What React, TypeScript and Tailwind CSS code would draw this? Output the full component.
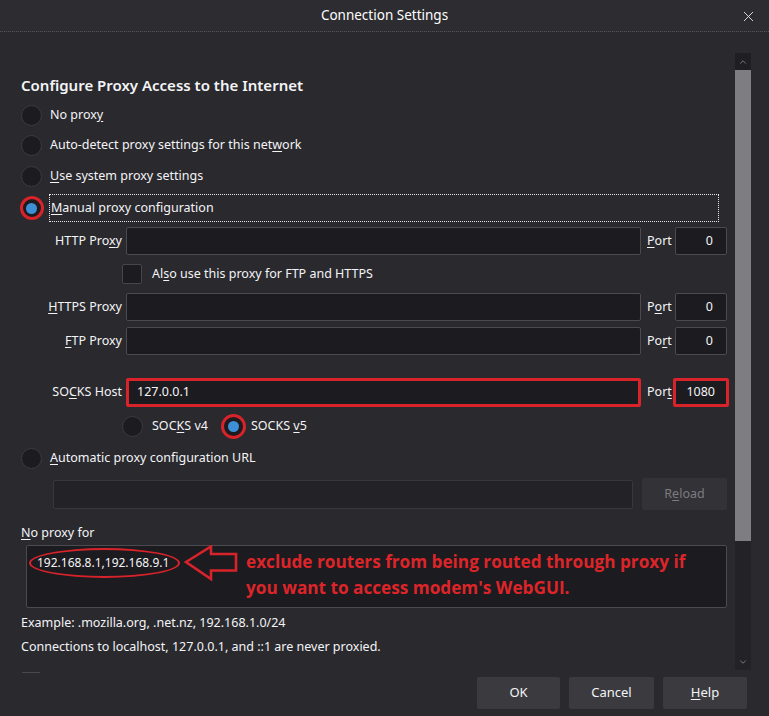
import { X, ChevronUp, ChevronDown } from 'lucide-react';

const u = 'underline underline-offset-[2px] decoration-1';

const Radio = ({ on = false }: { on?: boolean }) =>
  on ? (
    <div className="w-[21px] flex justify-center shrink-0">
      <div className="w-[24px] h-[24px] shrink-0 rounded-full border-[3px] border-[#d8232a] bg-[#1c1b20] flex items-center justify-center">
        <div className="w-[11px] h-[11px] rounded-full bg-[#3d8fd6]" />
      </div>
    </div>
  ) : (
    <div className="w-[21px] h-[21px] shrink-0 rounded-full bg-[#1c1b20] border border-[#3c3b41]" />
  );

const Field = ({ red = false, value = '' }: { red?: boolean; value?: string }) => (
  <div
    className={
      'w-[515px] h-full rounded-[2px] bg-[#1c1b20] flex items-center pl-[8px] text-[#f4f4f6] ' +
      (red ? 'border-[3px] border-[#d8232a]' : 'border border-[#4a4a50]')
    }
  >
    {value}
  </div>
);

const ProxyRow = ({
  label,
  port,
  portValue = '0',
  red = false,
  value = '',
  top,
}: {
  label: React.ReactNode;
  port: React.ReactNode;
  portValue?: string;
  red?: boolean;
  value?: string;
  top: string;
}) => (
  <div className={'flex items-stretch ' + top + (red ? ' h-[29px]' : ' h-[28px]')}>
    <div className="w-[105px] flex items-center justify-end pr-[4px]">{label}</div>
    <Field red={red} value={value} />
    <div className={'flex items-center pl-[6px] ' + (red ? 'w-[32px]' : 'w-[34px]')}>{port}</div>
    <div
      className={
        'rounded-[2px] bg-[#1c1b20] flex items-center justify-end ' +
        (red ? 'w-[56px] border-[3px] border-[#d8232a] pr-[11px]' : 'w-[52px] border border-[#4a4a50] pr-[13px]')
      }
    >
      {portValue}
    </div>
  </div>
);

export default function App() {
  return (
    <div className="w-[769px] h-[716px] bg-[#29292e] text-[#f4f4f6] text-[12.5px] font-['Noto_Sans',sans-serif] flex flex-col overflow-hidden">
      {/* title bar */}
      <div className="h-[32px] shrink-0 bg-[#2c2c31] border-b border-dotted border-[#56565b] flex items-center relative">
        <div className="flex-1 text-center text-[13.5px] text-white">Connection Settings</div>
        <X size={17} strokeWidth={1.3} className="absolute right-[12px] top-[8px] text-[#e6e6e6]" />
      </div>

      <div className="flex h-[645px] shrink-0">
        {/* scrolled content */}
        <div className="w-[735px] pl-[21px] flex flex-col overflow-hidden">
          <div className="mt-[43px] h-[20px] flex items-center text-[15px] font-semibold">
            Configure Proxy Access to the Internet
          </div>

          <div className="mt-[5px] h-[30px] flex items-center gap-[8px]">
            <Radio />
            <span>
              No prox<span className={u}>y</span>
            </span>
          </div>
          <div className="h-[31px] flex items-center gap-[8px]">
            <Radio />
            <span>
              Auto-detect proxy settings for this net<span className={u}>w</span>ork
            </span>
          </div>
          <div className="h-[31px] flex items-center gap-[8px]">
            <Radio />
            <span>
              <span className={u}>U</span>se system proxy settings
            </span>
          </div>
          <div className="mt-[2px] h-[28px] flex items-center gap-[7px]">
            <Radio on />
            <div className="w-[670px] h-full border border-dotted border-[#e6e6e6] flex items-center pl-[1px]">
              <span>
                <span className={u}>M</span>anual proxy configuration
              </span>
            </div>
          </div>

          <ProxyRow
            top="mt-[5px]"
            label={
              <span>
                HTTP Pro<span className={u}>x</span>y
              </span>
            }
            port={
              <span>
                <span className={u}>P</span>ort
              </span>
            }
          />

          <div className="mt-[9px] h-[20px] flex items-center">
            <div className="ml-[101px] w-[20px] h-[20px] rounded-[2px] bg-[#1c1b20] border border-[#46464c]" />
            <span className="ml-[10px]">
              Al<span className={u}>s</span>o use this proxy for FTP and HTTPS
            </span>
          </div>

          <ProxyRow
            top="mt-[9px]"
            label={
              <span>
                <span className={u}>H</span>TTPS Proxy
              </span>
            }
            port={
              <span>
                P<span className={u}>o</span>rt
              </span>
            }
          />
          <ProxyRow
            top="mt-[6px]"
            label={
              <span>
                <span className={u}>F</span>TP Proxy
              </span>
            }
            port={
              <span>
                Po<span className={u}>r</span>t
              </span>
            }
          />
          <ProxyRow
            top="mt-[23px]"
            red
            value="127.0.0.1"
            portValue="1080"
            label={
              <span>
                SO<span className={u}>C</span>KS Host
              </span>
            }
            port={
              <span>
                Por<span className={u}>t</span>
              </span>
            }
          />

          <div className="mt-[9px] h-[21px] flex items-center">
            <div className="ml-[101px]">
              <Radio />
            </div>
            <span className="ml-[9px]">
              SOC<span className={u}>K</span>S v4
            </span>
            <div className="ml-[13px] w-[25px] h-[25px] rounded-full border-[3px] border-[#d8232a] bg-[#1c1b20] flex items-center justify-center">
              <div className="w-[11px] h-[11px] rounded-full bg-[#3d8fd6]" />
            </div>
            <span className="ml-[5px]">
              SOCKS <span className={u}>v</span>5
            </span>
          </div>

          <div className="mt-[11px] h-[21px] flex items-center gap-[8px]">
            <Radio />
            <span>
              <span className={u}>A</span>utomatic proxy configuration URL
            </span>
          </div>

          <div className="mt-[9px] h-[32px] flex items-center">
            <div className="ml-[32px] w-[580px] h-[29px] bg-[#232227] border border-[#38373d] rounded-[2px]" />
            <div className="ml-[9px] w-[85px] h-[32px] bg-[#333237] rounded-[2px] flex items-center justify-center text-[#7c7b80]">
              <span>
                R<span className={u}>e</span>load
              </span>
            </div>
          </div>

          <div className="mt-[14px] h-[18px] flex items-center">
            <span>
              <span className={u}>N</span>o proxy for
            </span>
          </div>

          <div className="mt-[3px] ml-[5px] w-[701px] h-[63px] bg-[#1c1b20] border border-[#4a4a50] rounded-[2px] flex items-start">
            <div className="mt-[2px] ml-[2px] w-[151px] h-[30px] rounded-[50%] border-[2.5px] border-[#d8232a] flex items-center pl-[6px] text-[12px]">
              192.168.8.1,192.168.9.1
            </div>
            <svg width="56" height="40" viewBox="0 0 56 40" className="mt-[-1px] ml-[4px] shrink-0">
              <path
                d="M2 17 L27 1.5 L27 9 L52 9 L52 25.5 L27 25.5 L27 34 Z"
                fill="none"
                stroke="#d8232a"
                strokeWidth="2.6"
                strokeLinejoin="miter"
              />
            </svg>
            <div className="ml-[6px] mt-[3px] text-[17.2px] leading-[26px] font-bold text-[#dd2529] font-['Open_Sans',sans-serif]">
              exclude routers from being routed through proxy if
              <br />
              you want to access modem's WebGUI.
            </div>
          </div>

          <div className="mt-[6px] h-[18px] flex items-center">Example: .mozilla.org, .net.nz, 192.168.1.0/24</div>
          <div className="mt-[6px] h-[18px] flex items-center">
            Connections to localhost, 127.0.0.1, and ::1 are never proxied.
          </div>
          <div className="mt-[16px] ml-[1px] w-[18px] h-px bg-[#48484d]" />
        </div>

        {/* scrollbar */}
        <div className="w-[16px] mt-[21px] h-[617px] flex flex-col bg-[#232227]">
          <div className="h-[17px] bg-[#1f1e23] flex items-center justify-center">
            <ChevronUp size={10} strokeWidth={2} className="text-[#8a8a8e]" />
          </div>
          <div className="h-[471px] bg-[#7e7e82]" />
          <div className="flex-1" />
          <div className="h-[17px] flex items-center justify-center">
            <ChevronDown size={10} strokeWidth={2} className="text-[#8a8a8e]" />
          </div>
        </div>
      </div>

      {/* buttons */}
      <div className="flex justify-end gap-[9px] pr-[22px]">
        <div className="w-[83px] h-[32px] bg-[#3b3b3f] rounded-[2px] flex items-center justify-center text-[13px]">OK</div>
        <div className="w-[85px] h-[32px] bg-[#3b3b3f] rounded-[2px] flex items-center justify-center text-[13px]">Cancel</div>
        <div className="w-[84px] h-[32px] bg-[#3b3b3f] rounded-[2px] flex items-center justify-center text-[13px]">
          <span>
            <span className={u}>H</span>elp
          </span>
        </div>
      </div>
    </div>
  );
}
